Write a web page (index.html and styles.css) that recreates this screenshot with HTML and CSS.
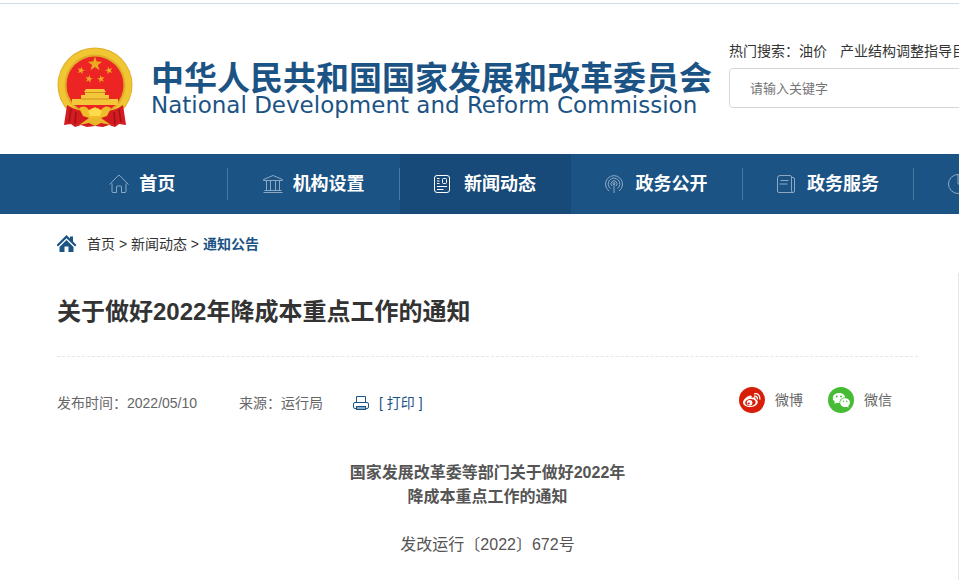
FILE: index.html
```html
<!DOCTYPE html>
<html lang="zh-CN">
<head>
<meta charset="utf-8">
<meta name="viewport" content="width=device-width, initial-scale=1">
<title>关于做好2022年降成本重点工作的通知</title>
<link rel="stylesheet" href="styles.css">
</head>
<body>
<header class="site-header">
  <div class="container header-row">
    <a class="brand" href="#">
      <svg class="emblem" viewBox="0 0 76 82" aria-hidden="true">
        <defs>
          <path id="star" d="M0-10 2.3-3.2 9.5-3.1 3.8 1.2 5.9 8.1 0 4-5.9 8.1-3.8 1.2-9.5-3.1-2.3-3.2Z"/>
        </defs>
        <circle cx="38" cy="38" r="37.500" fill="#e0ac28"/>
        <circle cx="38" cy="38" r="33.500" fill="none" stroke="#f0c632" stroke-width="6"/>
        <circle cx="38" cy="38" r="28.500" fill="#ec2424"/>
        <g fill="#eda923">
          <use href="#star" transform="translate(38 17) scale(.76)"/>
          <use href="#star" transform="translate(24 23.500) rotate(15) scale(.4)"/>
          <use href="#star" transform="translate(52 23.500) rotate(-15) scale(.4)"/>
          <use href="#star" transform="translate(32 32) rotate(12) scale(.4)"/>
          <use href="#star" transform="translate(44 32) rotate(-12) scale(.4)"/>
        </g>
        <path fill="#f4c63a" d="M29 42H47L49 45H27ZM28 46H48V48H52V52H61V58H15V52H24V48H28Z"/>
        <path d="M28 45.500H48M24 52H52" stroke="#cf8f1c" stroke-width="1"/>
        <path d="M10 58Q20 64 28 64H48Q58 64 66 58L69 78 62 77 58 80 52 78 46 80 38 79 30 80 24 78 18 80 14 77 7 78Z" fill="#d31b20"/>
        <path d="M14 62 12 75M19 65 18 77M62 62 64 75M57 65 58 77" stroke="#a01018" stroke-width="1.500"/>
        <path d="M22 61Q28 57 32 63L38 60 44 63Q48 57 54 61L50 69 44 71H32L26 69Z" fill="#f0bd2a"/>
        <path d="M31 64Q38 58 45 64L43 69H33Z" fill="#ffda4b"/>
        <path d="M22 78 32 71H44L54 78 44 76 38 79 32 76Z" fill="#eab52a"/>
      </svg>
      <span class="brand-text">
        <span class="brand-cn">中华人民共和国国家发展和改革委员会</span>
        <span class="brand-en" lang="en">National Development and Reform Commission</span>
      </span>
    </a>
    <form class="search">
      <div class="hot"><span>热门搜索：</span><a href="#">油价</a><a class="hot-next" href="#">产业结构调整指导目录</a></div>
      <input class="search-input" type="search" placeholder="请输入关键字" aria-label="请输入关键字">
    </form>
  </div>
</header>

<nav class="main-nav">
  <div class="container nav-grid">
    <a class="nav-item" href="#">
      <svg class="nav-icon" viewBox="0 0 20 20" aria-hidden="true"><path d="M.5 10.500 9 1.800Q10 .8 11 1.800L19.500 10.500M3 9.500V17.500Q3 18.500 4 18.500H7.500V13Q7.500 12 8.500 12H11.500Q12.500 12 12.500 13V18.500H16Q17 18.500 17 17.500V9.500"/></svg>
      首页</a>
    <a class="nav-item" href="#">
      <svg class="nav-icon" viewBox="0 0 20 20" aria-hidden="true"><path d="M.5 5.500 10 1.500 19.500 5.500V6.500H.5ZM3.500 6.500V16M7.500 6.500V16M12.500 6.500V16M16.500 6.500V16M1.500 16.500H18.500M.5 18.500H19.500"/></svg>
      机构设置</a>
    <a class="nav-item active" href="#" aria-current="page">
      <svg class="nav-icon" viewBox="0 0 20 20" aria-hidden="true"><rect x=".5" y="1.500" width="15" height="17" rx="2.500"/><rect x="8.500" y="4.500" width="4" height="5" rx="1"/><path d="M3 4.500H5.500M3 7H5.500M3 9.500H5.500M3 12.500H13M3 15.500H9.500"/></svg>
      新闻动态</a>
    <a class="nav-item" href="#">
      <svg class="nav-icon" viewBox="0 0 20 20" aria-hidden="true"><path d="M4 17A8.500 8.500 0 1 1 14 17M5.500 14.500A5.800 5.800 0 1 1 12.500 14.500M7 12A3 3 0 1 1 11 12M9 9.500V19"/><circle cx="9" cy="9.500" r="1"/></svg>
      政务公开</a>
    <a class="nav-item" href="#">
      <svg class="nav-icon" viewBox="0 0 20 20" aria-hidden="true"><path d="M3 1.500H13Q14.500 1.500 14.500 3V16.500Q14.500 18.500 16 18.500H2Q.5 18.500.5 17V4Q.5 1.500 3 1.500M14.500 3.500H16Q17.500 3.500 17.500 5V17Q17.500 18.500 16 18.500M3.500 6.500H11.500M2.500 10H10.500"/></svg>
      政务服务</a>
    <a class="nav-item nav-more" href="#">
      <svg class="nav-icon" viewBox="0 0 20 20" aria-hidden="true"><circle cx="10" cy="10" r="9.500"/><path d="M10 .5V10H19.500"/></svg>
    </a>
  </div>
</nav>

<div class="container">
  <nav class="crumbs">
    <svg class="crumb-icon" viewBox="0 0 20 18" aria-hidden="true"><path d="M9.500 0 13 3.500V1.500H16V6.500L19.500 10 18 11.500 9.500 3.200 1 11.500-.5 10ZM9.500 5 16.500 12V17H11.500V11.500H7.500V17H2.500V12Z"/></svg>
    <span><a href="#">首页</a> &gt; <a href="#">新闻动态</a> &gt; <a class="current" href="#">通知公告</a></span>
  </nav>
  <div class="columns">
    <main class="article">
      <h1 class="title">关于做好2022年降成本重点工作的通知</h1>
      <div class="meta">
        <div class="facts">
          <span>发布时间：2022/05/10</span>
          <span class="source">来源：运行局</span>
          <button class="print" type="button">
            <svg class="print-icon" viewBox="0 0 16 16" aria-hidden="true"><path d="M3.500 7V1.500H12.500V7M3.500 13.500H2Q.5 13.500.5 12V9Q.5 7.500 2 7.500H14Q15.500 7.500 15.500 9V12Q15.500 13.500 14 13.500H12.500"/><rect class="tray" x="3.500" y="11.500" width="9" height="3"/></svg>
            [ 打印 ]
          </button>
        </div>
        <div class="share">
          <a href="#">
            <svg class="share-icon" viewBox="0 0 26 26" aria-hidden="true"><circle cx="13" cy="13" r="13" fill="#d81e06"/><path d="M11.500 8.500C13 8.500 13 10 12.500 11 15 9.800 17.300 10.200 16.600 12.300 21 14 18.500 20 11.500 20 7 20 4 18 4 15.500 4 12.500 8.500 8.500 11.500 8.500Z" fill="#fff"/><ellipse cx="11.300" cy="15.600" rx="5.300" ry="3.500" transform="rotate(-8 11 15)" fill="#d81e06"/><circle cx="10.600" cy="15.800" r="2.800" fill="#fff"/><circle cx="9.700" cy="16.500" r="1.100" fill="#d81e06"/><path d="M15.500 6.800Q20.800 6 20.900 12M15.500 9.200Q18.400 8.800 18.400 11.800" fill="none" stroke="#fff" stroke-width="1.300" stroke-linecap="round"/></svg>
            微博</a>
          <a href="#">
            <svg class="share-icon" viewBox="0 0 26 26" aria-hidden="true"><circle cx="13" cy="13" r="13" fill="#45bc33"/><path d="M11 6C14.500 6 17 8 17.300 10.500 13.500 10.500 11 13 11.600 16 10.500 16.200 9.500 16 8.500 15.700L6.300 17 6.900 14.800C3 12 4.800 6 11 6Z" fill="#fff"/><path d="M17 11.300C20 11.300 22 13.300 22 15.500 22 17 21.200 18.200 20.200 19L20.700 20.800 18.700 19.800C15 20.600 12.200 18.400 12.200 15.700 12.200 13.200 14.300 11.300 17 11.300Z" fill="#fff"/><g fill="#45bc33"><circle cx="8.800" cy="9.500" r=".9"/><circle cx="13" cy="9.500" r=".9"/><circle cx="15.500" cy="14.300" r=".7"/><circle cx="18.700" cy="14.300" r=".7"/></g></svg>
            微信</a>
        </div>
      </div>
      <div class="content">
        <h2 class="doc-title">国家发展改革委等部门关于做好2022年<br>降成本重点工作的通知</h2>
        <p class="doc-number">发改运行〔2022〕672号</p>
      </div>
    </main>
    <aside class="sidebar"></aside>
  </div>
</div>
</body>
</html>
```
FILE: styles.css
```css
* {
  box-sizing: border-box;
}

body {
  margin: 0;
  overflow: hidden;
  background: #fff;
  color: #333;
  font: 14px/20px "Liberation Sans", "Noto Sans CJK SC", sans-serif;
}

a {
  color: inherit;
  text-decoration: none;
}

svg {
  flex: none;
}

.container {
  min-width: 1200px;
  max-width: 1257px;
  padding-left: 57px;
}

.site-header {
  margin-top: 3px;
  border-top: 1px solid #d3dce6;
}

.header-row {
  display: grid;
  grid-template-columns: 672px 528px;
  padding-top: 37px;
  padding-bottom: 25px;
}

.brand {
  display: flex;
  align-items: flex-start;
  gap: 18px;
  padding-top: 6px;
  color: #1c5385;
}

.emblem {
  width: 76px;
  height: 82px;
}

.brand-text {
  display: flex;
  flex-direction: column;
  padding-top: 12px;
  white-space: nowrap;
}

.brand-cn {
  font: bold 33px/34px "Noto Sans CJK SC", sans-serif;
}

.brand-en {
  font: 23px/24px "DejaVu Sans", sans-serif;
}

.hot {
  white-space: nowrap;
}

.hot-next {
  margin-left: 13px;
}

.search-input {
  display: block;
  width: 100%;
  height: 40px;
  margin-top: 7px;
  padding: 0 20px;
  border: 1px solid #d6d6d6;
  border-radius: 4px;
  background: #fff;
  color: #333;
  font: inherit;
  font-size: 13px;
}

.search-input::placeholder {
  color: #757575;
}

.main-nav {
  background: #1c5385;
}

.nav-grid {
  display: grid;
  grid-template-columns: repeat(7, 1fr);
  min-width: 1257px;
}

.nav-item {
  display: flex;
  align-items: center;
  justify-content: center;
  gap: 10px;
  height: 60px;
  border-right: 1px solid;
  border-image: linear-gradient(transparent 15px, #4b789f 15px 45px, transparent 45px) 1;
  color: #fff;
  font-size: 18px;
  font-weight: bold;
}

.nav-item.active {
  border-color: #174a78;
  border-image: none;
  background: #174a78;
}

.nav-more {
  justify-content: flex-start;
  padding-left: 34px;
}

.nav-icon {
  width: 20px;
  height: 20px;
  fill: none;
  stroke: #8da9c2;
}

.active .nav-icon {
  stroke: #fff;
}

.crumbs {
  display: flex;
  align-items: center;
  gap: 10px;
  padding-top: 20px;
}

.crumb-icon {
  width: 20px;
  height: 18px;
  fill: #1c5385;
}

.current {
  color: #1c5385;
  font-weight: bold;
}

.columns {
  display: grid;
  grid-template-columns: 861px 299px;
  gap: 40px;
  margin-top: 19px;
}

.title {
  margin: 0;
  padding: 21px 0 26px;
  border-bottom: 1px dashed #e6e6e6;
  font-size: 24px;
  line-height: 36px;
}

.meta {
  display: flex;
  justify-content: space-between;
  padding: 30px 26px 0 0;
  color: #666;
}

.facts,
.share,
.share a {
  display: flex;
  align-items: center;
}

.facts {
  padding-top: 6px;
}

.source {
  margin-left: 42px;
}

.print {
  display: flex;
  align-items: center;
  gap: 10px;
  margin-left: 30px;
  padding: 0;
  border: 0;
  background: none;
  color: #1c5385;
  font: inherit;
}

.print-icon {
  width: 16px;
  height: 16px;
  fill: none;
  stroke: #1c5385;
}

.tray {
  fill: #8da9c2;
}

.share {
  gap: 25px;
}

.share a {
  gap: 10px;
}

.share-icon {
  width: 26px;
  height: 26px;
}

.content {
  padding-top: 48px;
  color: #555;
  font-size: 16px;
  line-height: 24px;
  text-align: center;
}

.doc-title {
  margin: 0 0 24px;
  font-size: 16px;
}

.doc-number {
  margin: 0;
}

.sidebar {
  min-height: 307px;
  border: 1px solid #e6e6e6;
  border-bottom: 0;
}
```
